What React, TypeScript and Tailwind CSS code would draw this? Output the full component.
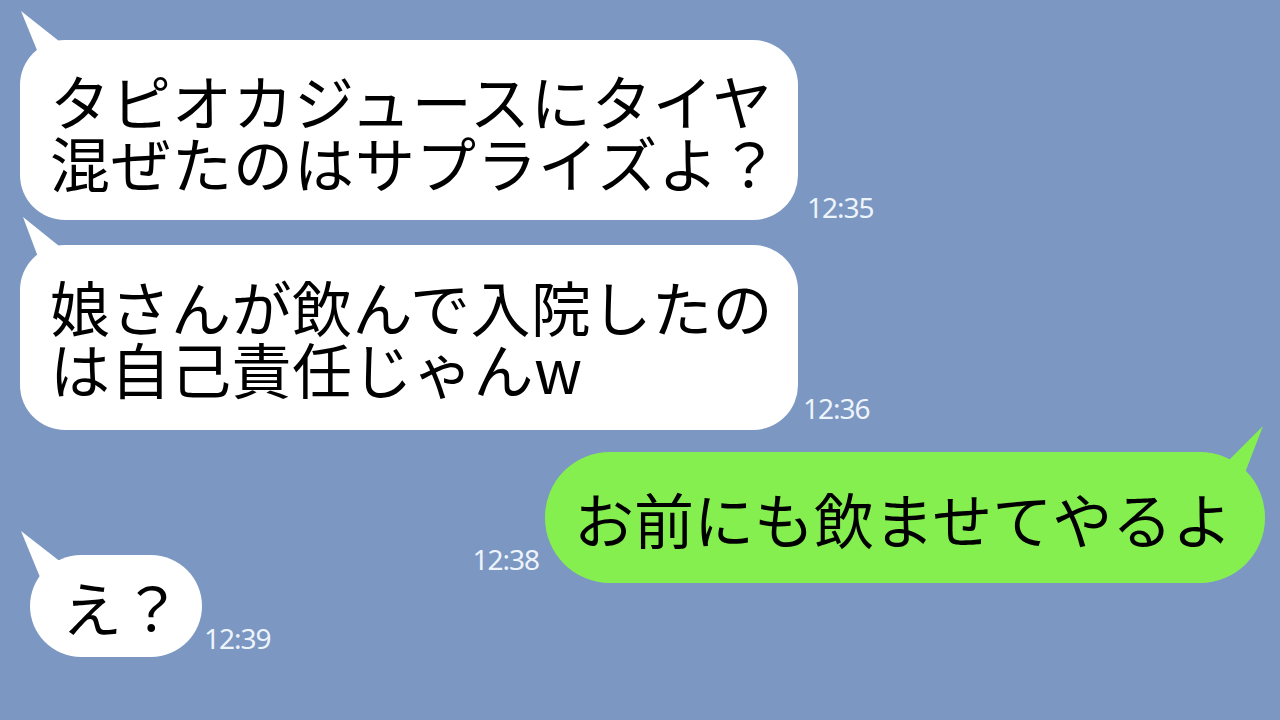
const JP = 'font-["Noto_Sans_CJK_JP","Noto_Sans",sans-serif]';

function TailLeft({ points, className }: { points: string; className: string }) {
  return (
    <svg className={className} width="60" height="60" viewBox="0 0 60 60">
      <polygon points={points} fill="#ffffff" />
    </svg>
  );
}

function Time({ children, className }: { children: string; className?: string }) {
  return (
    <span
      className={`font-["Noto_Sans",sans-serif] text-[28px] leading-none tracking-[-1px] text-[#eef4fb] ${className ?? ''}`}
    >
      {children}
    </span>
  );
}

export default function App() {
  return (
    <div className={`w-[1280px] h-[720px] overflow-hidden bg-[#7b97c2] flex flex-col ${JP} text-[60px] leading-[62px] text-black`}>
      {/* incoming 1 */}
      <div className="flex items-end pl-[20px] mt-[40px]">
        <div className="relative w-[778px] h-[180px] rounded-[45px] bg-white pl-[30px] pt-[29px] whitespace-nowrap tracking-[1px]">
          <TailLeft className="absolute left-0 top-[-30px]" points="1,1 21,50 44,35" />
          <span className="relative">タピオカジュースにタイヤ<br />混ぜたのはサプライズよ？</span>
        </div>
        <Time className="ml-[9px] mb-[-1px]">12:35</Time>
      </div>

      {/* incoming 2 */}
      <div className="flex items-end pl-[20px] mt-[25px]">
        <div className="relative w-[778px] h-[185px] rounded-[45px] bg-white pl-[30px] pt-[30px] whitespace-nowrap tracking-[0.5px]">
          <TailLeft className="absolute left-0 top-[-30px]" points="3,2 21,50 44,35" />
          <span className="relative">娘さんが飲んで入院したの<br />は自己責任じゃんw</span>
        </div>
        <Time className="ml-[5px] mb-[8px]">12:36</Time>
      </div>

      {/* outgoing */}
      <div className="flex items-end justify-end pr-[15px] mt-[22px]">
        <Time className="mr-[6px] mb-[10px]">12:38</Time>
        <div className="relative w-[720px] h-[131px] rounded-[65px] bg-[#86ef50] pl-[29px] flex items-center whitespace-nowrap">
          <svg className="absolute right-0 top-[-30px]" width="60" height="60" viewBox="0 0 60 60">
            <polygon points="58,4 20,42 38,56" fill="#86ef50" />
          </svg>
          <span className="relative">お前にも飲ませてやるよ</span>
        </div>
      </div>

      {/* incoming 3 */}
      <div className="flex items-end pl-[30px] mt-[-28px]">
        <div className="relative w-[172px] h-[102px] rounded-[51px] bg-white pl-[32px] flex items-center whitespace-nowrap">
          <TailLeft className="absolute left-[-10px] top-[-25px]" points="1,1 22,52 46,36" />
          <span className="relative">え？</span>
        </div>
        <Time className="ml-[2px] mb-[5px]">12:39</Time>
      </div>
    </div>
  );
}
